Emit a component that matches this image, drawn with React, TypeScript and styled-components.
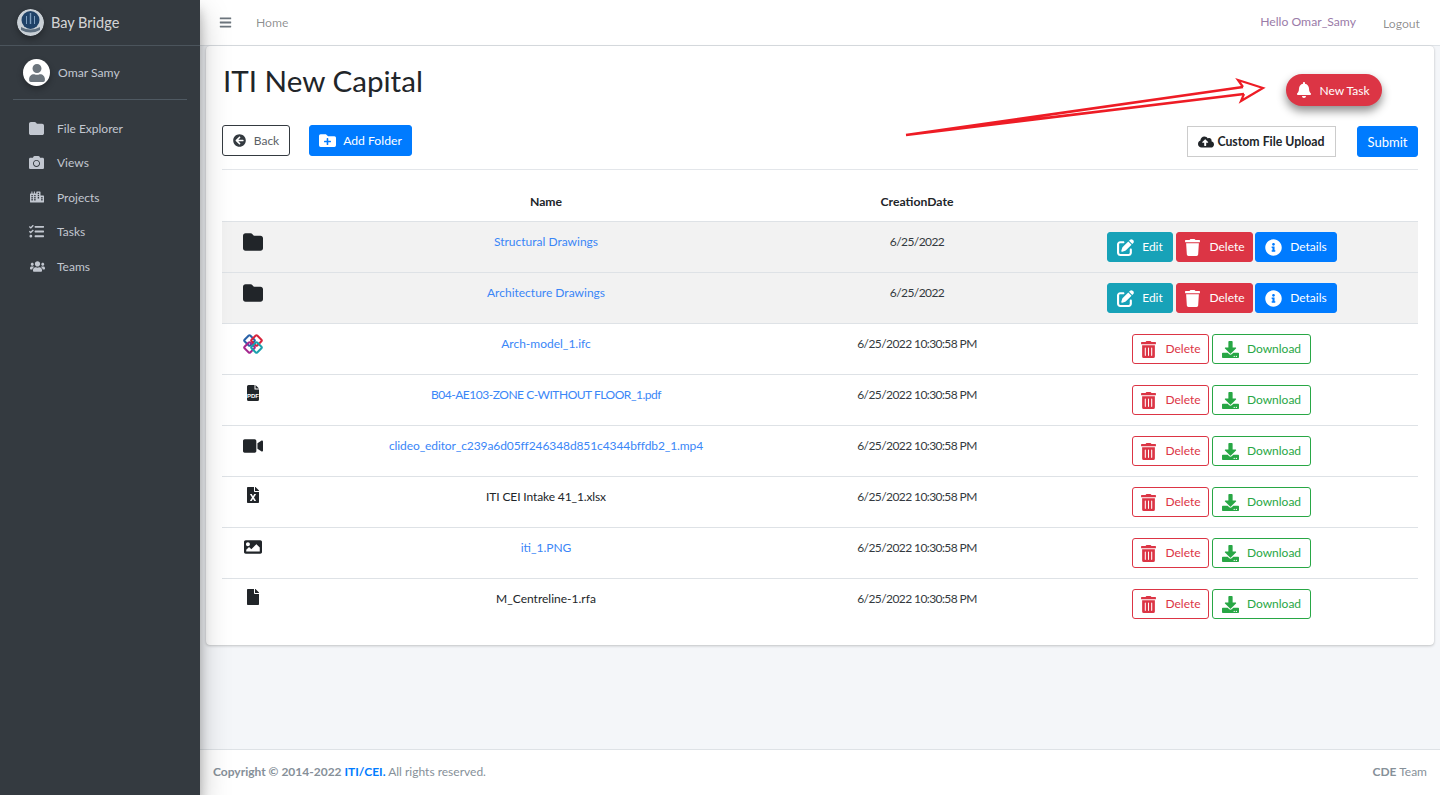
import React from 'react';
import styled, { createGlobalStyle } from 'styled-components';
import {
  FaArrowCircleLeft,
  FaBars,
  FaBell,
  FaCamera,
  FaCity,
  FaCloudUploadAlt,
  FaDownload,
  FaFile,
  FaFileExcel,
  FaFolderPlus,
  FaImage,
  FaInfoCircle,
  FaTasks,
  FaTrash,
  FaTrashAlt,
  FaUser,
  FaUsers,
  FaVideo,
} from 'react-icons/fa';
import { FaFolder, FaPenToSquare } from 'react-icons/fa6';

const GlobalStyle = createGlobalStyle`
  html, body {
    margin: 0;
    padding: 0;
    height: 100%;
    overflow: hidden;
    background: #f4f6f9;
    font-family: "Lato", "Noto Sans", sans-serif;
    color: #212529;
  }
  * { box-sizing: border-box; }
`;

const Shell = styled.div`
  display: flex;
  width: 1440px;
  height: 795px;
`;

const Sidebar = styled.aside`
  width: 200px;
  flex: none;
  background: #343a40;
  box-shadow: 0 14px 28px rgba(0, 0, 0, 0.25), 0 10px 10px rgba(0, 0, 0, 0.22);
  position: relative;
  z-index: 2;
`;

const Brand = styled.div`
  height: 46px;
  display: flex;
  align-items: center;
  gap: 7px;
  padding-left: 17px;
  border-bottom: 1px solid #4b545c;
  color: rgba(255, 255, 255, 0.8);
  font-size: 14.5px;
`;

const BrandLogo = styled.svg`
  width: 27px;
  height: 27px;
  border-radius: 50%;
  box-shadow: 0 3px 6px rgba(0, 0, 0, 0.3);
`;

const UserPanel = styled.div`
  margin: 13px 13px 0;
  height: 27px;
  padding: 0 0 13px 10px;
  display: flex;
  align-items: center;
  gap: 8px;
  box-sizing: content-box;
  border-bottom: 1px solid #4f5962;
  color: #c2c7d0;
  font-size: 12.2px;
`;

const Avatar = styled.div`
  width: 27px;
  height: 27px;
  border-radius: 50%;
  background: #fff;
  color: #6c757d;
  display: flex;
  align-items: center;
  justify-content: center;
  font-size: 18px;
  box-shadow: 0 3px 6px rgba(0, 0, 0, 0.3);
`;

const Menu = styled.nav`
  display: flex;
  flex-direction: column;
  padding-top: 11px;
`;

const MenuItem = styled.a`
  height: 34.5px;
  display: flex;
  align-items: center;
  padding-left: 29px;
  color: #c2c7d0;
  font-size: 12px;
`;

const MenuIcon = styled.span<{ $size: number; $inset: number }>`
  width: 28px;
  flex: none;
  display: flex;
  padding-left: ${(p) => p.$inset}px;
  font-size: ${(p) => p.$size}px;
`;

const Main = styled.div`
  flex: 1;
  min-width: 0;
  display: flex;
  flex-direction: column;
`;

const TopBar = styled.header`
  height: 46px;
  flex: none;
  background: #fff;
  border-bottom: 1px solid #dee2e6;
  display: flex;
  align-items: center;
  padding: 0 20px 0 19px;
  color: rgba(0, 0, 0, 0.45);
  font-size: 12.2px;
`;

const Burger = styled.span`
  display: flex;
  font-size: 13px;
  color: #6c757d;
  margin-right: 24px;
`;

const Spacer = styled.div`
  flex: 1;
`;

const Hello = styled.span`
  color: #9a7ba8;
  margin-right: 27px;
  position: relative;
  top: -1px;
`;

const Logout = styled.span`
  position: relative;
  top: 1px;
`;

const Content = styled.main`
  flex: 1;
  padding: 0 6px;
  min-height: 0;
`;

const Card = styled.section`
  position: relative;
  height: 599px;
  background: #fff;
  border-radius: 4px;
  box-shadow: 0 0 1px rgba(0, 0, 0, 0.13), 0 1px 3px rgba(0, 0, 0, 0.2);
  padding: 0 16px;
`;

const TitleRow = styled.div`
  height: 79px;
  display: flex;
  justify-content: space-between;
  align-items: flex-start;
`;

const Title = styled.h1`
  margin: 15px 0 0 1px;
  font-size: 29.6px;
  font-weight: 400;
  line-height: 40px;
  color: #212529;
`;

const Pill = styled.button`
  margin: 28px 36px 0 0;
  width: 96px;
  height: 32px;
  border: 0;
  border-radius: 16px;
  background: #dc3545;
  color: #fff;
  font: inherit;
  font-size: 12px;
  display: flex;
  align-items: center;
  justify-content: center;
  gap: 7px;
  padding: 0 2px 0 0;
  box-shadow: 0 5px 10px rgba(0, 0, 0, 0.45);
  svg {
    font-size: 16px;
  }
`;

const Arrow = styled.svg`
  position: absolute;
  left: 0;
  top: 0;
  width: 1228px;
  height: 120px;
  pointer-events: none;
`;

const Toolbar = styled.div`
  display: flex;
  align-items: flex-start;
  height: 31px;
  padding-bottom: 13px;
  box-sizing: content-box;
  border-bottom: 1px solid #e3e6ea;
`;

const Btn = styled.button<{ $tone: 'primary' | 'danger' | 'info' | 'dangerLine' | 'successLine' | 'darkLine' }>`
  height: 30px;
  padding: 0;
  border-radius: 3px;
  font: inherit;
  font-size: 12px;
  display: inline-flex;
  align-items: center;
  justify-content: center;
  gap: 8px;
  white-space: nowrap;
  border: 1px solid
    ${(p) =>
      ({
        primary: '#007bff',
        danger: '#dc3545',
        info: '#17a2b8',
        dangerLine: '#dc3545',
        successLine: '#28a745',
        darkLine: '#343a40',
      })[p.$tone]};
  background: ${(p) =>
    ({
      primary: '#007bff',
      danger: '#dc3545',
      info: '#17a2b8',
      dangerLine: '#fff',
      successLine: '#fff',
      darkLine: '#fff',
    })[p.$tone]};
  color: ${(p) =>
    ({
      primary: '#fff',
      danger: '#fff',
      info: '#fff',
      dangerLine: '#dc3545',
      successLine: '#28a745',
      darkLine: '#5a6066',
    })[p.$tone]};
  svg {
    font-size: 17px;
    flex: none;
  }
`;

const BackBtn = styled(Btn)`
  width: 68px;
  height: 31px;
  svg {
    color: #343a40;
    font-size: 13px;
  }
`;

const AddBtn = styled(Btn)`
  width: 103px;
  height: 31px;
  margin-left: 19px;
  font-size: 12.2px;
  gap: 7px;
`;

const UploadLabel = styled.label`
  margin: 1px 0 0 auto;
  width: 149px;
  height: 31px;
  border: 1px solid #ccc;
  display: flex;
  align-items: center;
  justify-content: center;
  gap: 3px;
  font-size: 12.3px;
  font-weight: 700;
  color: #212529;
  svg {
    font-size: 16px;
  }
`;

const SubmitBtn = styled(Btn)`
  width: 61px;
  height: 31px;
  margin: 1px 0 0 21px;
  font-size: 13px;
`;

const Table = styled.table`
  width: 1196px;
  border-collapse: collapse;
  table-layout: fixed;
  font-size: 12px;
`;

const HeadCell = styled.th<{ $w?: number }>`
  width: ${(p) => (p.$w ? `${p.$w}px` : 'auto')};
  height: 51px;
  padding: 12px 0 0;
  text-align: center;
  vertical-align: top;
  font-weight: 700;
  line-height: 39px;
  font-size: 12.2px;
`;

const Row = styled.tr<{ $striped?: boolean }>`
  background: ${(p) => (p.$striped ? '#f2f2f2' : '#fff')};
  border-top: 1px solid #dee2e6;
`;

const Cell = styled.td`
  height: 51px;
  padding: 10px 0;
  line-height: 20px;
  text-align: center;
  vertical-align: top;
`;

const DateCell = styled(Cell)`
  letter-spacing: -0.58px;
  color: #343a40;
`;

const IconCell = styled(Cell)<{ $size?: number }>`
  font-size: ${(p) => p.$size ?? 16}px;
  color: #212529;
  svg {
    display: block;
    margin: 0 auto;
    position: relative;
    left: -1px;
  }
`;

const FileLink = styled.a<{ $plain?: boolean; $tight?: number }>`
  color: ${(p) => (p.$plain ? '#212529' : '#3a86f7')};
  letter-spacing: ${(p) => p.$tight ?? 0}px;
`;

const FolderActions = styled.div`
  display: flex;
  justify-content: center;
  gap: 3px;
  padding-right: 1px;
`;

const FileActions = styled(FolderActions)`
  padding-right: 2px;
`;

const EditBtn = styled(Btn)`
  width: 66px;
`;

const DeleteBtn = styled(Btn)`
  width: 77px;
`;

const DetailsBtn = styled(Btn)`
  width: 82px;
  margin-left: -1px;
`;

const DownloadBtn = styled(Btn)`
  width: 99px;
`;

const Footer = styled.footer`
  height: 46px;
  flex: none;
  background: #fff;
  border-top: 1px solid #dee2e6;
  display: flex;
  align-items: center;
  justify-content: space-between;
  padding: 0 13px 2px;
  color: #869099;
  font-size: 12px;
`;

const FooterLink = styled.span`
  color: #007bff;
`;

const IfcIcon = () => (
  <svg width="20" height="20" viewBox="0 0 20 20" fill="none" strokeWidth="2">
    <rect x="2.5" y="2.5" width="8" height="8" rx="1" transform="rotate(45 6.5 6.5)" stroke="#2a62a8" />
    <rect x="9.5" y="2.5" width="8" height="8" rx="1" transform="rotate(45 13.5 6.5)" stroke="#d8243c" />
    <rect x="2.5" y="9.5" width="8" height="8" rx="1" transform="rotate(45 6.5 13.5)" stroke="#a5278e" />
    <rect x="9.5" y="9.5" width="8" height="8" rx="1" transform="rotate(45 13.5 13.5)" stroke="#1aa0ad" />
  </svg>
);

const PdfIcon = () => (
  <svg width="12" height="16" viewBox="0 0 12 16">
    <path d="M1.500 0H7.500V4.500H12V14.500A1.500 1.500 0 0 1 10.500 16H1.500A1.500 1.500 0 0 1 0 14.500V1.500A1.500 1.500 0 0 1 1.500 0ZM8.500 0L12 3.500H8.500Z" fill="#212529" />
    <text x="6" y="12.800" textAnchor="middle" fontSize="6" fontWeight="700" fill="#fff" fontFamily="Liberation Sans, sans-serif">
      PDF
    </text>
  </svg>
);

type FileRow = { icon: React.ReactNode; name: string; plain?: boolean; tight?: number; size?: number };

const folders = ['Structural Drawings', 'Architecture Drawings'];

const files: FileRow[] = [
  { icon: <IfcIcon />, name: 'Arch-model_1.ifc' },
  { icon: <PdfIcon />, name: 'B04-AE103-ZONE C-WITHOUT FLOOR_1.pdf', tight: -0.47 },
  { icon: <FaVideo />, name: 'clideo_editor_c239a6d05ff246348d851c4344bffdb2_1.mp4', tight: -0.1, size: 20 },
  { icon: <FaFileExcel />, name: 'ITI CEI Intake 41_1.xlsx', plain: true, tight: -0.12 },
  { icon: <FaImage />, name: 'iti_1.PNG', size: 18 },
  { icon: <FaFile />, name: 'M_Centreline-1.rfa', plain: true },
];

const menu = [
  { icon: <FaFolder />, label: 'File Explorer', size: 15, inset: 0 },
  { icon: <FaCamera />, label: 'Views', size: 15, inset: 0 },
  { icon: <FaCity />, label: 'Projects', size: 14, inset: 1 },
  { icon: <FaTasks />, label: 'Tasks', size: 15, inset: 0 },
  { icon: <FaUsers />, label: 'Teams', size: 15, inset: 1 },
];

export default function App() {
  return (
    <Shell>
      <GlobalStyle />
      <Sidebar>
        <Brand>
          <BrandLogo viewBox="0 0 27 27">
            <circle cx="13.5" cy="13.5" r="13.5" fill="#c9d0d6" />
            <circle cx="13.5" cy="11" r="9" fill="#1f4268" />
            <path d="M12.8 4h1.4v11h-1.4zM9 7h1v8H9zM17 7h1v8h-1z" fill="#7f9fbf" />
            <path d="M4 18q9.500 5 19 0v3q-9.500 5-19 0z" fill="#5d6f80" />
          </BrandLogo>
          Bay Bridge
        </Brand>
        <UserPanel>
          <Avatar>
            <FaUser />
          </Avatar>
          Omar Samy
        </UserPanel>
        <Menu>
          {menu.map((m) => (
            <MenuItem key={m.label}>
              <MenuIcon $size={m.size} $inset={m.inset}>
                {m.icon}
              </MenuIcon>
              {m.label}
            </MenuItem>
          ))}
        </Menu>
      </Sidebar>
      <Main>
        <TopBar>
          <Burger>
            <FaBars />
          </Burger>
          Home
          <Spacer />
          <Hello>Hello Omar_Samy</Hello>
          <Logout>Logout</Logout>
        </TopBar>
        <Content>
          <Card>
            <TitleRow>
              <Title>ITI New Capital</Title>
              <Pill>
                <FaBell />
                New Task
              </Pill>
            </TitleRow>
            <Arrow viewBox="0 0 1228 120" fill="none" stroke="#ee1c25" strokeWidth="2.2">
              <path d="M700 89 L1037 41 M700 89 L1038 48" strokeWidth="2.6" />
              <path d="M1037 41 L1032 34 L1057 42 L1035 55 L1038 48" />
            </Arrow>
            <Toolbar>
              <BackBtn $tone="darkLine">
                <FaArrowCircleLeft />
                Back
              </BackBtn>
              <AddBtn $tone="primary">
                <FaFolderPlus />
                Add Folder
              </AddBtn>
              <UploadLabel>
                <FaCloudUploadAlt />
                Custom File Upload
              </UploadLabel>
              <SubmitBtn $tone="primary">Submit</SubmitBtn>
            </Toolbar>
            <Table>
              <thead>
                <tr>
                  <HeadCell $w={63} />
                  <HeadCell $w={522}>Name</HeadCell>
                  <HeadCell $w={220}>CreationDate</HeadCell>
                  <HeadCell />
                </tr>
              </thead>
              <tbody>
                {folders.map((name) => (
                  <Row key={name} $striped>
                    <IconCell $size={20}>
                      <FaFolder />
                    </IconCell>
                    <Cell>
                      <FileLink>{name}</FileLink>
                    </Cell>
                    <DateCell>6/25/2022</DateCell>
                    <Cell>
                      <FolderActions>
                        <EditBtn $tone="info">
                          <FaPenToSquare />
                          Edit
                        </EditBtn>
                        <DeleteBtn $tone="danger">
                          <FaTrash />
                          Delete
                        </DeleteBtn>
                        <DetailsBtn $tone="primary">
                          <FaInfoCircle />
                          Details
                        </DetailsBtn>
                      </FolderActions>
                    </Cell>
                  </Row>
                ))}
                {files.map((f) => (
                  <Row key={f.name}>
                    <IconCell $size={f.size}>{f.icon}</IconCell>
                    <Cell>
                      <FileLink $plain={f.plain} $tight={f.tight}>
                        {f.name}
                      </FileLink>
                    </Cell>
                    <DateCell>6/25/2022 10:30:58 PM</DateCell>
                    <Cell>
                      <FileActions>
                        <DeleteBtn $tone="dangerLine">
                          <FaTrashAlt />
                          Delete
                        </DeleteBtn>
                        <DownloadBtn $tone="successLine">
                          <FaDownload />
                          Download
                        </DownloadBtn>
                      </FileActions>
                    </Cell>
                  </Row>
                ))}
              </tbody>
            </Table>
          </Card>
        </Content>
        <Footer>
          <span>
            <b>
              Copyright © 2014-2022 <FooterLink>ITI/CEI.</FooterLink>
            </b>{' '}
            All rights reserved.
          </span>
          <span>
            <b>CDE</b> Team
          </span>
        </Footer>
      </Main>
    </Shell>
  );
}
